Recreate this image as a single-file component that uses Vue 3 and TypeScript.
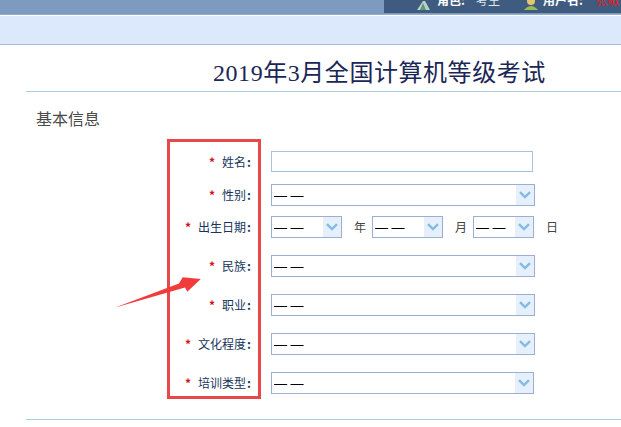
<script setup lang="ts">
interface Row {
  label: string
  kind: 'input' | 'select' | 'date'
  cls: string
}

const rows: Row[] = [
  { label: '姓名', kind: 'input', cls: 'r-name' },
  { label: '性别', kind: 'select', cls: 'r-sex' },
  { label: '出生日期', kind: 'date', cls: 'r-date' },
  { label: '民族', kind: 'select', cls: 'r-std' },
  { label: '职业', kind: 'select', cls: 'r-std' },
  { label: '文化程度', kind: 'select', cls: 'r-std' },
  { label: '培训类型', kind: 'select', cls: 'r-std r-last' },
]

const dateParts = [
  { unit: '年', cls: 'w-year' },
  { unit: '月', cls: 'w-month' },
  { unit: '日', cls: 'w-day' },
]
</script>

<template>
  <div class="page">
    <header class="topbar">
      <div class="userbar">
        <svg class="ico" width="14" height="10" viewBox="0 0 14 10">
          <path d="M0 10 L6 1 L8 1 L13 10 Z" fill="#b7d2c4" />
          <path d="M6 3 L9 10 L3 10 Z" fill="#5d9a7c" />
        </svg>
        <b class="key">角色:</b>
        <span class="val">考生</span>
        <svg class="ico ico-user" width="16" height="10" viewBox="0 0 16 10">
          <circle cx="8" cy="1" r="4" fill="#e4c66c" />
          <path d="M1 10 Q8 2 15 10 Z" fill="#9ab85c" />
        </svg>
        <b class="key">用户名:</b>
        <span class="who">张敏</span>
      </div>
    </header>
    <div class="band"></div>

    <main class="content">
      <h1 class="title">2019年3月全国计算机等级考试</h1>
      <h2 class="section">基本信息</h2>

      <form class="form" @submit.prevent>
        <div v-for="row in rows" :key="row.label" class="row" :class="row.cls">
          <label class="label"><i class="star">*</i>{{ row.label }}<b class="colon">:</b></label>

          <input v-if="row.kind === 'input'" class="text" type="text" />

          <div v-else-if="row.kind === 'select'" class="select">
            <select><option>— —</option></select>
            <span class="arrow">
              <svg width="12" height="8" viewBox="0 0 12 8"><path d="M1 1.2 L6 6 L11 1.2" fill="none" stroke="#84bbe0" stroke-width="2.4" /></svg>
            </span>
          </div>

          <div v-else class="date">
            <template v-for="part in dateParts" :key="part.unit">
              <div class="select" :class="part.cls">
                <select><option>— —</option></select>
                <span class="arrow">
                  <svg width="12" height="8" viewBox="0 0 12 8"><path d="M1 1.2 L6 6 L11 1.2" fill="none" stroke="#84bbe0" stroke-width="2.4" /></svg>
                </span>
              </div>
              <span class="unit">{{ part.unit }}</span>
            </template>
          </div>
        </div>
      </form>
      <hr class="rule" />
    </main>

    <div class="mark-box"></div>
    <svg class="mark-arrow" width="100" height="40" viewBox="110 272 100 40">
      <polygon points="114.5,307.8 179,283.5 182.7,277.3 200.8,279 187.3,291.8 185,287.5" fill="#f23c3c" />
    </svg>
  </div>
</template>

<style>
html, body { background: #fff; }
</style>

<style scoped>
.page {
  position: relative;
  width: 621px;
  height: 427px;
  overflow: hidden;
  background: #fff;
  font-family: "Noto Sans CJK SC", "Liberation Sans", sans-serif;
  font-size: 12px;
}
.topbar {
  height: 15px;
  background: #7d9bbe;
  border-bottom: 1px solid #92aed0;
  box-sizing: border-box;
  display: flex;
  justify-content: flex-end;
}
.userbar {
  width: 237px;
  height: 13px;
  background: #3f5c80;
  box-sizing: border-box;
  padding: 0 0 6px 33px;
  display: flex;
  align-items: flex-end;
  overflow: hidden;
  font-size: 12px;
  line-height: 14px;
  color: #fff;
  white-space: nowrap;
  flex: none;
}
.ico { flex: none; margin-right: 6px; margin-bottom: -3px; }
.ico-user { margin-left: 23px; margin-right: 4px; }
.key { font-weight: 700; }
.val { margin-left: 11px; color: #dfe7f0; }
.who { margin-left: 13px; color: #e02020; }
.band {
  height: 29px;
  background: #dce9fc;
  border-bottom: 1px solid #a6bcd8;
  box-sizing: border-box;
  margin-top: 1px;
}
.content {
  padding-left: 26px;
}
.title {
  margin: 0;
  height: 47px;
  box-sizing: border-box;
  padding: 11px 0 0 187px;
  font-family: "Liberation Serif", "Noto Sans CJK SC", serif;
  font-size: 24px;
  line-height: 34px;
  font-weight: 400;
  letter-spacing: 0.55px;
  color: #1a2756;
  border-bottom: 1px solid #b3cbdf;
  white-space: nowrap;
}
.section {
  margin: 0 0 22px;
  padding: 15px 0 0 10px;
  font-size: 16px;
  line-height: 22px;
  font-weight: 400;
  color: #4a4a4a;
}
.row {
  display: flex;
  align-items: center;
  margin-top: 17px;
}
.r-name { margin-top: 0; }
.r-sex { margin-top: 12px; }
.r-date { margin-top: 10px; }
.label {
  width: 225px;
  flex: none;
  text-align: right;
  margin-right: 20px;
  color: #16355a;
  font-size: 12px;
  line-height: 16px;
}
.star {
  color: #d0101a;
  font-style: normal;
  font-weight: 700;
  margin-right: 7px;
}
.colon { font-weight: 700; margin-left: 1px; }
.text {
  width: 262px;
  height: 21px;
  box-sizing: border-box;
  border: 1px solid #a6c2dc;
  padding: 0;
  background: #fff;
  outline: none;
}
.select {
  position: relative;
  width: 264px;
  height: 22px;
  box-sizing: border-box;
  flex: none;
}
.r-last .select { width: 263px; }
.select select {
  display: block;
  width: 100%;
  height: 100%;
  box-sizing: border-box;
  appearance: none;
  border: 1px solid #9bb0d0;
  border-radius: 0;
  background: #fff;
  padding: 0 0 0 2px;
  font-family: "Liberation Sans", sans-serif;
  font-size: 13px;
  color: #000;
  outline: none;
}
.arrow {
  position: absolute;
  top: 1px;
  right: 1px;
  bottom: 1px;
  width: 18px;
  background: #e6f0fc;
  display: flex;
  align-items: center;
  justify-content: center;
  pointer-events: none;
}
.date { display: flex; align-items: center; }
.w-year { width: 71px; }
.w-month { width: 71px; }
.w-day { width: 61px; }
.unit {
  color: #444;
  font-size: 12px;
  line-height: 16px;
  width: 12px;
  margin-left: 12px;
}
.w-year + .unit { margin-right: 6px; }
.w-month + .unit { margin-right: 6px; }
.rule {
  margin: 25px 0 0;
  border: 0;
  border-top: 1px solid #b3cbdf;
}
.mark-box {
  position: absolute;
  left: 167px;
  top: 139px;
  width: 94px;
  height: 260px;
  box-sizing: border-box;
  border: 3px solid #e94848;
  pointer-events: none;
}
.mark-arrow {
  position: absolute;
  left: 110px;
  top: 272px;
  pointer-events: none;
}
</style>
